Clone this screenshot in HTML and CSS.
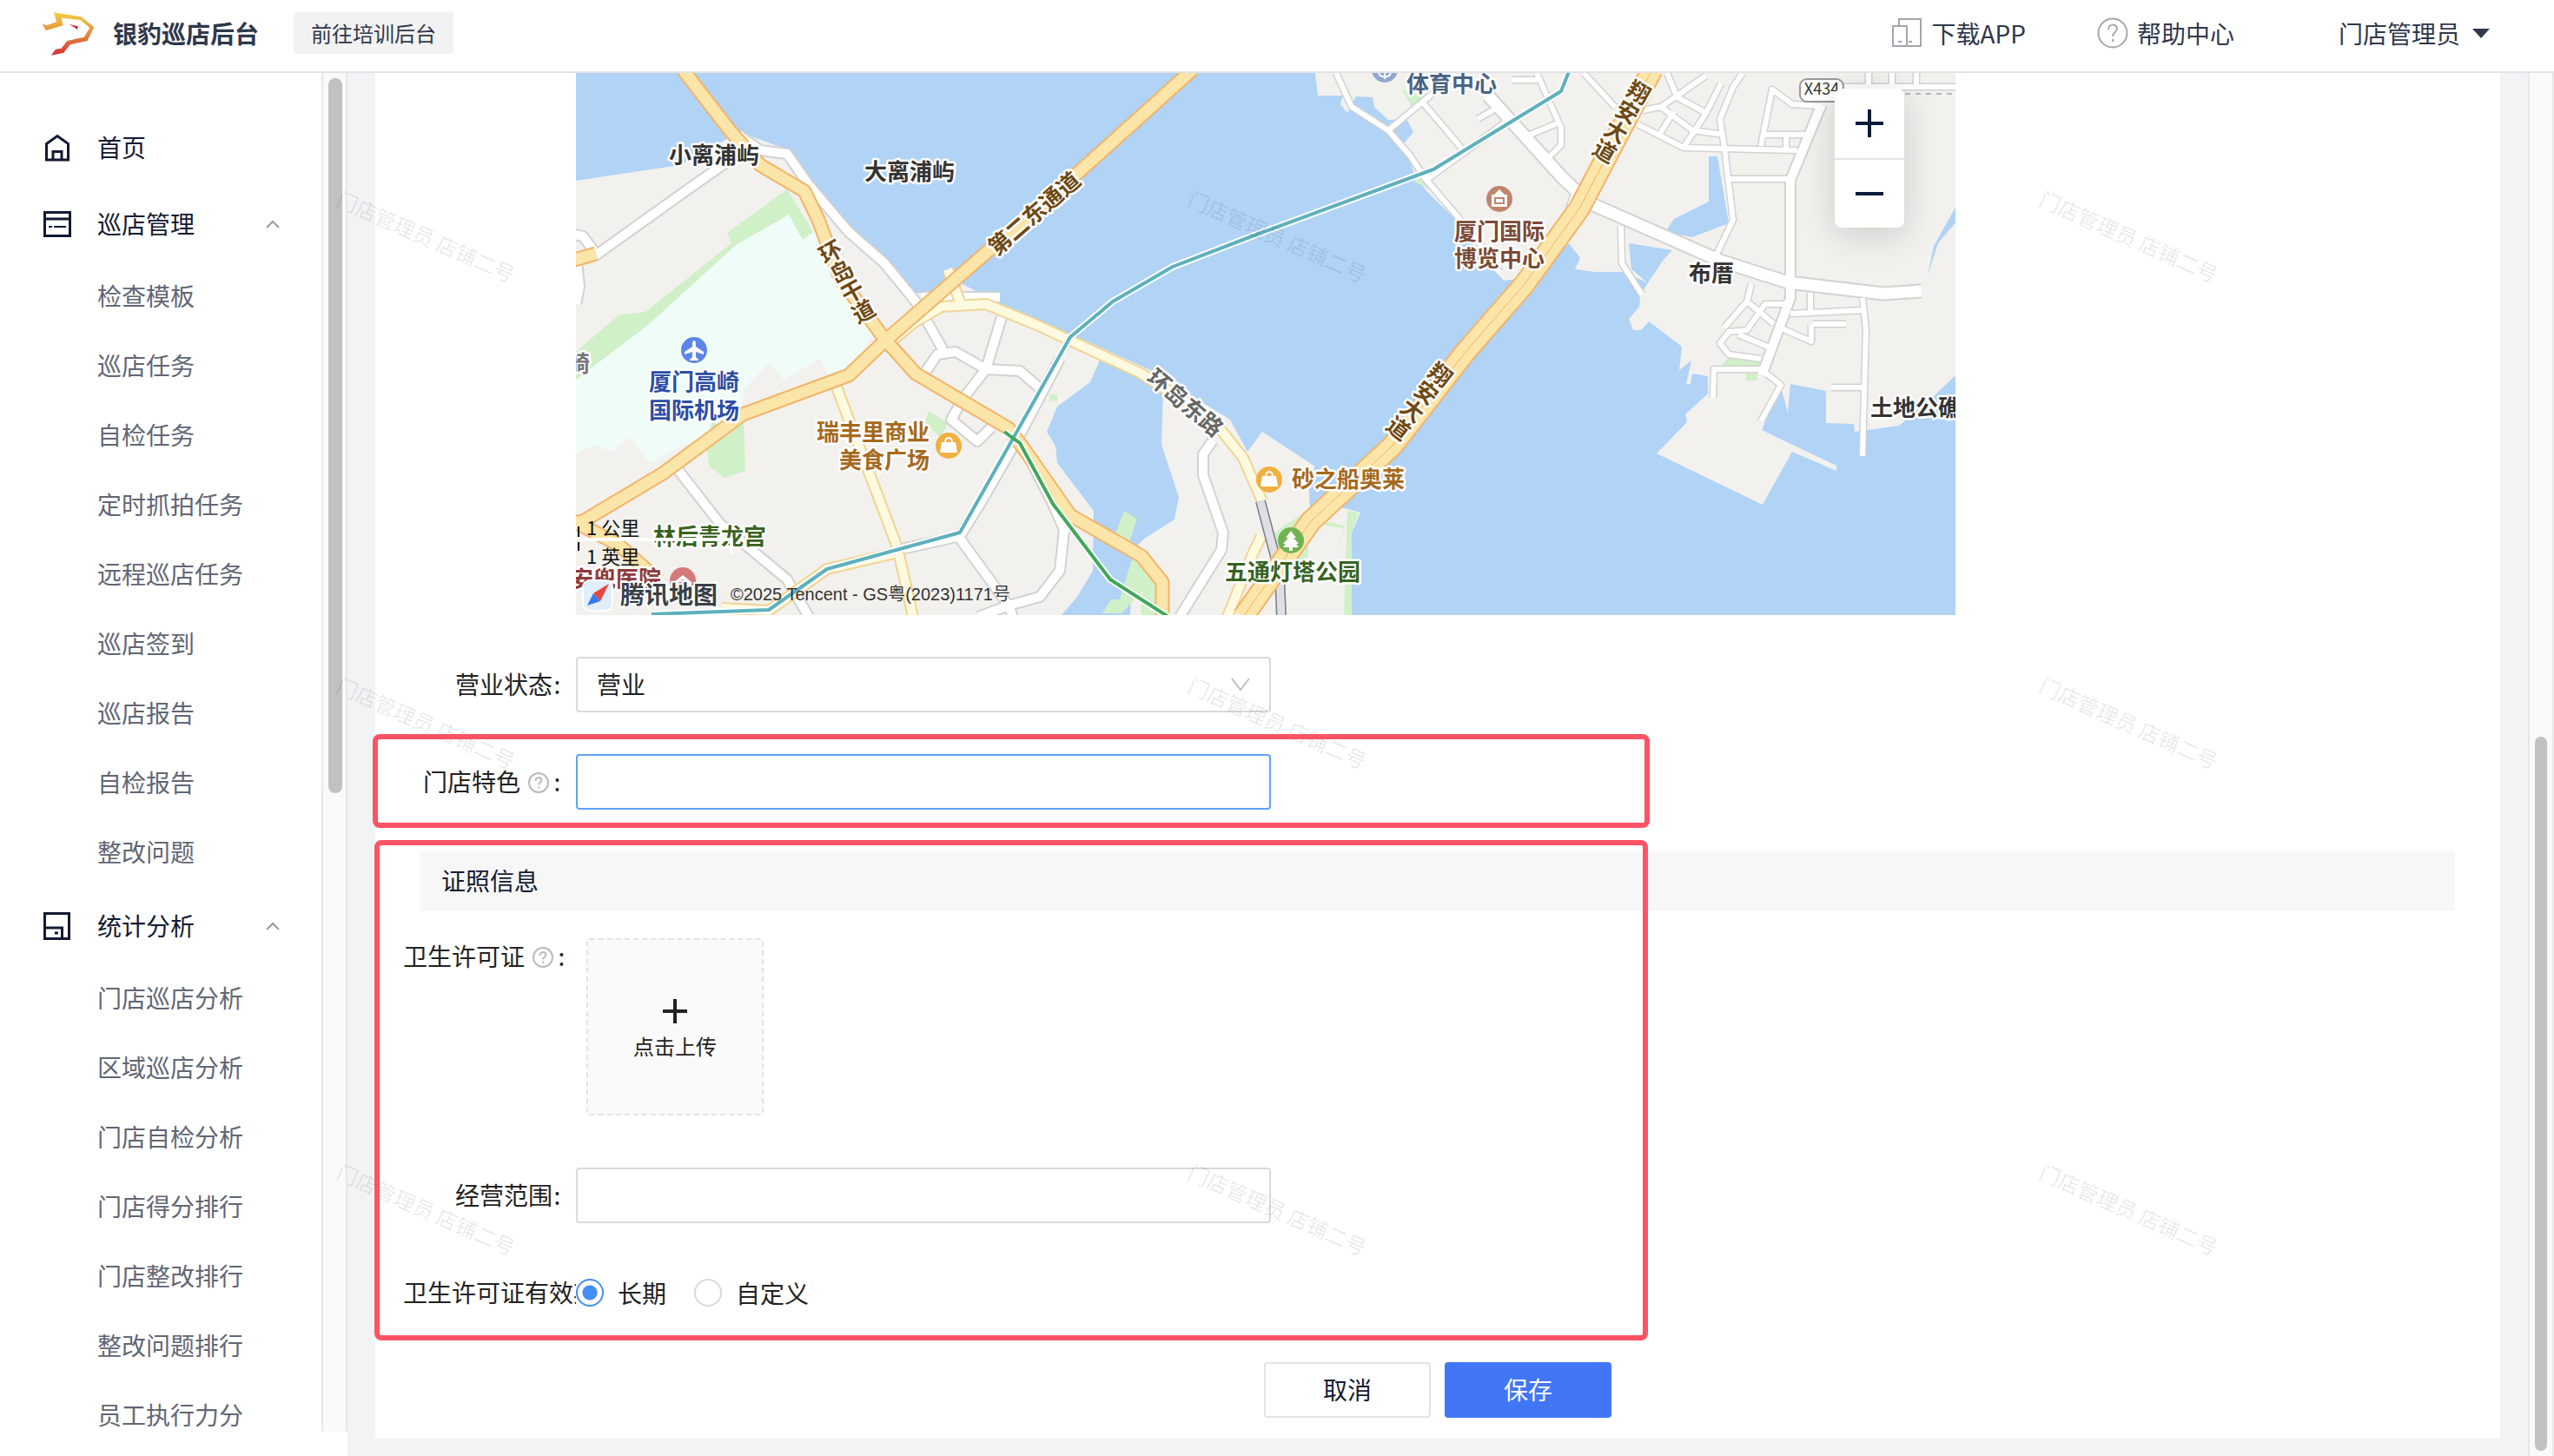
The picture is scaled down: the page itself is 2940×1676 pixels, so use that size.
FILE: index.html
```html
<!DOCTYPE html>
<html lang="zh-CN">
<head>
    <meta charset="utf-8">
    <meta name="viewport" content="width=device-width, initial-scale=1.0">
    <title>银豹巡店后台</title>
    <link rel="stylesheet" href="styles.css">
</head>
<body>
    <header class="header">
        <svg class="logo" viewBox="0 0 240 180">
            <defs>
                <linearGradient id="logoFill" x1="0" y1="0" x2="0" y2="1">
                    <stop offset="0" stop-color="#f3cf45"/>
                    <stop offset="0.55" stop-color="#e2853c"/>
                    <stop offset="1" stop-color="#d92b35"/>
                </linearGradient>
            </defs>
            <path fill="url(#logoFill)" d="M66 19L160 34 205 70 182 117 122 130 100 158 56 167 72 146 92 143 112 117 170 104 190 72 158 45 92 38 98 64 38 82 25 56 40 64 75 52z"/>
            <path fill="#d92b35" d="M119 60L150 67 146 79 138 71z"/>
        </svg>
        <h1 class="brand">银豹巡店后台</h1>
        <button class="switch-btn" type="button">前往培训后台</button>
        <nav class="header-nav">
            <a class="header-link" href="#">
                <svg width="36" height="36" viewBox="0 0 36 36" fill="none" stroke="#a3a6ad" stroke-width="2">
                    <path d="M9 10V2h25v31H2V10h16v23"/>
                    <path d="M8 28h4M20 28h4"/>
                </svg>
                下载APP
            </a>
            <a class="header-link header-help" href="#">
                <svg width="36" height="36" viewBox="0 0 36 36" fill="none" stroke="#a3a6ad" stroke-width="2">
                    <circle cx="18" cy="18" r="16.5"/>
                    <path d="M13 14c0-7 10-7 10-1 0 4-5 4-5 9M18 25v3"/>
                </svg>
                帮助中心
            </a>
            <button class="user-btn" type="button">门店管理员
                <svg width="20" height="11" viewBox="0 0 20 11"><path fill="#30384b" d="M0 0h20L10 11z"/></svg>
            </button>
        </nav>
    </header>

    <div class="layout">
        <aside class="sidebar">
            <div class="menu-wrap">
                <ul class="menu">
                    <li class="menu-head">
                        <svg class="menu-icon" viewBox="0 0 32 32"><path d="M3.5 30V11.500L16 2.500 28.500 11.500V30zM11 30v-9.500h10V30"/></svg>
                        <a href="#">首页</a>
                    </li>
                    <li class="menu-head">
                        <svg class="menu-icon" viewBox="0 0 32 32"><path d="M1.500 2.500h29v27h-29zM1.500 10h29"/><path stroke-width="2" d="M6 19h4M12 19h14"/></svg>
                        <a href="#">巡店管理</a>
                        <svg class="menu-arrow" viewBox="0 0 16 10"><path d="M1 9l7-7 7 7"/></svg>
                    </li>
                    <li class="menu-item"><a href="#">检查模板</a></li>
                    <li class="menu-item"><a href="#">巡店任务</a></li>
                    <li class="menu-item"><a href="#">自检任务</a></li>
                    <li class="menu-item"><a href="#">定时抓拍任务</a></li>
                    <li class="menu-item"><a href="#">远程巡店任务</a></li>
                    <li class="menu-item"><a href="#">巡店签到</a></li>
                    <li class="menu-item"><a href="#">巡店报告</a></li>
                    <li class="menu-item"><a href="#">自检报告</a></li>
                    <li class="menu-item"><a href="#">整改问题</a></li>
                    <li class="menu-head">
                        <svg class="menu-icon" viewBox="0 0 32 32"><path d="M1.500 1.500h28v29h-28zM1.500 18h20v12M13 24h4"/></svg>
                        <a href="#">统计分析</a>
                        <svg class="menu-arrow" viewBox="0 0 16 10"><path d="M1 9l7-7 7 7"/></svg>
                    </li>
                    <li class="menu-item"><a href="#">门店巡店分析</a></li>
                    <li class="menu-item"><a href="#">区域巡店分析</a></li>
                    <li class="menu-item"><a href="#">门店自检分析</a></li>
                    <li class="menu-item"><a href="#">门店得分排行</a></li>
                    <li class="menu-item"><a href="#">门店整改排行</a></li>
                    <li class="menu-item"><a href="#">整改问题排行</a></li>
                    <li class="menu-item"><a href="#">员工执行力分</a></li>
                </ul>
                <div class="track"><div class="thumb thumb-menu"></div></div>
            </div>
        </aside>

        <main class="content">
            <form class="panel">
                <div class="map">
                    <svg class="map-svg" viewBox="662 84 1588 624">
                        <defs>
                            <g id="minor">
                                <path d="M1537 84L1555 123 1597 150 1623 180 1639 205 1675 247 1702 280 1725 313"/>
                                <path d="M1597 150L1649 107 1675 84M1636 117L1681 170M1641 207L1733 140M1700 137L1726 122"/>
                                <path d="M1768 84L1775 100 1796 147 1796 167 1780 183M1760 155L1792 142M1740 92H1770"/>
                                <path d="M1822 84L1858 123M1884 143L1937 170 2068 173M1918 84L1928 108"/>
                                <path d="M2005 84L1994 100 1979 137 1984 170 1994 253 1973 297"/>
                                <path d="M1890 127L1911 123 1963 87M1911 123L1947 150 1984 155M1926 110L1963 130 1980 96M1908 157L1926 128M1937 170L1963 130"/>
                                <path d="M1989 206H2057M2026 168L2039 103 2062 120 2094 122M2030 155H2078M2055 170V156"/>
                                <path d="M1865 260L1866 303 1889 339M1805 240L1812 222"/>
                                <path d="M2143 343L2147 380 2143 525M2107 446H2143M2060 361L2146 357M2083 337V360M2086 373H2124"/>
                                <path d="M2015 327L2010 347 1984 377M2010 347L2041 373M2060 350L2031 350 2010 380 1989 382 1979 395 1989 408 2026 413M2000 385L2036 400M2050 378L2084 393V374"/>
                                <path d="M1971 458L1972 425H2026L2049 443 2026 485"/>
                                <path d="M2100 100H2250M2150 84V100M2177 84V100M2205 84V100"/>
                            </g>
                            <g id="major">
                                <path d="M849 155L874 173 905 177 930 213 976 267 1017 303 1053 347 1083 400 1085 410"/>
                                <path d="M845 180L788 220 686 293 670 272 650 268M663 300L666 330 662 350"/>
                                <path d="M1063 430L1078 408 1099 405 1134 425 1173 427 1196 447M1152 365L1134 425 1109 457 1094 483 1124 508 1140 492M1060 342H1150"/>
                                <path d="M1219 413L1175 497 1129 577 1104 617 1037 632M1104 620L1160 697 1165 710M1125 710L1160 697 1196 687 1219 657 1224 610 1211 580 1175 510"/>
                                <path d="M775 535L828 603 905 667 930 710"/>
                                <path d="M1395 507L1384 523 1384 547 1407 613 1405 633 1357 710"/>
                                <path d="M2096 120L2060 207V343L2027 432"/>
                            </g>
                            <g id="yellow">
                                <path d="M961 443L1032 630 1050 710M1017 400L1050 372 1083 353 1134 350 1190 373 1313 430 1395 483 1430 527 1452 577"/>
                                <path d="M1037 635L951 655 884 703 830 700M1451 617L1440 640 1412 710M1105 350L1090 310"/>
                            </g>
                            <g id="orange">
                                <path d="M785 80L839 150 874 190 925 220 941 253 966 320 1017 390 1053 430 1160 493 1180 520 1231 593 1313 640 1337 670V710"/>
                                <path d="M1372 80L1242 197 1017 393 976 432 854 477 762 545 670 600 650 606M650 595L711 627 757 668M650 302L685 292"/>
                            </g>
                            <path id="bridge" d="M1901 80L1817 240 1754 327 1686 405 1602 513 1508 600 1430 710"/>
                            <path id="rail" d="M1450 577L1472 660 1474 710"/>
                        </defs>

                        <rect class="land" x="662" y="84" width="1588" height="624"/>
                        <!-- sea -->
                        <path class="water" d="M662 84V208L782 190 850 152 905 172 966 247 1017 300 1053 337 1073 338 1094 320 1145 347 1190 370 1257 396 1323 426 1415 483 1435 520 1452 497 1513 537 1505 547 1507 587 1518 573 1539 583 1565 590 1555 613V708H2250V432L2224 457 2185 490 2134 497 2133 488 2101 487V450L2060 442 2057 475 2049 445 2027 495 2113 536V542L2062 520 2028 581 1906 522 1941 486 1939 477 1965 453V433L1947 430 1945 442H1940L1946 415 1932 426 1935 399 1897 370 1888 380H1879L1874 367 1886 353 1887 340 1895 327 1913 300 1924 288 1874 280 1877 310 1895 325 1866 313 1835 313 1812 310 1818 297 1805 280 1780 307 1754 320 1730 323 1700 292 1675 253 1641 220 1626 197 1615 165 1626 152 1618 137 1597 138 1581 123 1579 112 1560 111 1550 130 1542 120 1545 110H1516L1513 84z"/>
                        <path class="water" d="M1966 180H1976L1989 257 1947 273 1916 267 1926 252 1966 232zM2251 237L2225 283 2218 317 2230 280 2251 255z"/>
                        <path class="water" d="M1267 410L1338 447 1336 512 1356 572 1351 598 1316 620 1303 633 1300 708H1221L1239 687 1257 657 1258 588 1216 533 1214 513 1204 497 1216 468 1254 440z"/>
                        <!-- airport -->
                        <path class="airport" d="M905 235L938 267 1007 380 990 407 956 437 943 412 902 438 884 418 856 447 851 480 747 533 724 503 703 520 683 512 662 522V430L711 395 844 283z"/>
                        <path class="green" d="M905 218L935 267 923 276 907 247 846 282 744 375 711 400 662 437V405L711 363 742 359 841 280 836 268z"/>
                        <path class="green" d="M818 487H855L857 542 833 550 816 537 812 513zM1068 473L1091 487 1081 503 1063 487zM1207 454H1216V462H1207zM1293 588L1308 597 1298 627 1282 617z"/>
                        <path class="green" d="M1303 640L1330 660 1333 708H1312L1314 680 1290 706H1268L1278 690 1288 690z"/>
                        <path class="green" d="M1505 587L1466 613 1470 668 1505 640zM1550 588L1563 590 1555 613V708H1546zM1523 600L1547 605 1540 634 1545 608 1525 605z"/>
                        <path class="green" d="M1824 240L1811 267 1780 307 1775 300zM1613 103L1641 110 1623 122zM1626 197L1644 217 1628 210zM1989 412L2026 417V422H1979zM2009 430H2022V438H2009z"/>

                        <use href="#minor" class="road minor-case"/>
                        <use href="#major" class="road major-case"/>
                        <path class="road wide-case" d="M1712 110L1796 203 1827 233 1979 300 2057 325 2167 338 2211 335"/>
                        <use href="#minor" class="road minor-fill"/>
                        <use href="#major" class="road major-fill"/>
                        <path class="road wide-fill" d="M1712 110L1796 203 1827 233 1979 300 2057 325 2167 338 2211 335"/>
                        <path class="dots" d="M2180 108H2250"/>
                        <use href="#yellow" class="road yellow-case"/>
                        <use href="#yellow" class="road yellow-fill"/>
                        <use href="#orange" class="road orange-case"/>
                        <use href="#orange" class="road orange-fill"/>
                        <use href="#rail" class="road rail-case"/>
                        <use href="#rail" class="road rail-fill"/>
                        <use href="#bridge" class="road bridge-case"/>
                        <use href="#bridge" class="road bridge-fill"/>
                        <use href="#bridge" class="road bridge-mid"/>

                        <!-- metro lines -->
                        <path class="road metro-case" d="M1806 80L1796 105 1649 195 1440 272 1349 307 1280 347 1231 388 1104 613 951 655 884 702 749 707M1155 497L1173 510 1211 580 1277 667 1344 710"/>
                        <path class="road metro-teal" d="M1806 80L1796 105 1649 195 1440 272 1349 307 1280 347 1231 388 1104 613 951 655 884 702 749 707"/>
                        <path class="road metro-green" d="M1155 497L1173 510 1211 580 1277 667 1344 710"/>

                        <g class="pins">
                            <circle cx="798" cy="403" r="15" fill="#5c85e8"/>
                            <path d="M798 392c2 0 2 3 2 7l9 6v3l-9-3v6l3 3v1h-10v-1l3-3v-6l-9 3v-3l9-6c0-4 0-7 2-7z"/>
                            <circle cx="1091" cy="513" r="15" fill="#f0b040"/>
                            <path d="M1083 509h16l2 12h-20z"/><path class="pin-line" stroke="#fff" d="M1087 510c0-8 8-8 8 0"/>
                            <circle cx="1460" cy="552" r="15" fill="#f0b040"/>
                            <path d="M1452 548h16l2 12h-20z"/><path class="pin-line" stroke="#fff" d="M1456 549c0-8 8-8 8 0"/>
                            <circle cx="1725" cy="229" r="15" fill="#c0846c"/>
                            <path d="M1716 224h18v14h-18zM1725 218l6 6h-12z"/><path class="pin-line" stroke="#c0846c" d="M1720 228h10v6h-10z"/>
                            <circle cx="1485" cy="622" r="15" fill="#70b352"/>
                            <path d="M1485 611l6 8h-3l6 7h-3l3 4h-7v4h-4v-4h-7l3-4h-3l6-7h-3z"/>
                            <circle cx="785" cy="668" r="15" fill="#d47a7a"/>
                            <path d="M775 670l10-8 10 8v8h-20z"/><path class="pin-line" stroke="#d47a7a" d="M785 667v9M780 671h10"/>
                            <circle cx="1593" cy="80" r="15" fill="#8fa9d0"/>
                            <path class="pin-line" stroke="#fff" d="M1586 84c2 6 12 6 14 0M1593 84v7"/>
                        </g>

                        <g class="labels">
                            <text x="821" y="188">小离浦屿</text>
                            <text x="1046" y="207">大离浦屿</text>
                            <text x="1670" y="106" fill="#4a6485">体育中心</text>
                            <text x="1725" y="276" fill="#7b4a35">厦门国际</text>
                            <text x="1725" y="307" fill="#7b4a35">博览中心</text>
                            <text x="1969" y="324">布厝</text>
                            <text x="2204" y="479">土地公礁</text>
                            <text x="798" y="449" fill="#2b4ea5">厦门高崎</text>
                            <text x="798" y="482" fill="#2b4ea5">国际机场</text>
                            <text class="label-end" x="1069" y="507" fill="#a5691d">瑞丰里商业</text>
                            <text class="label-end" x="1069" y="539" fill="#a5691d">美食广场</text>
                            <text x="1551" y="561" fill="#a5691d">砂之船奥莱</text>
                            <text x="1487" y="668" fill="#38631f">五通灯塔公园</text>
                            <text x="816" y="627" fill="#38631f">林后青龙宫</text>
                            <text x="708" y="676" fill="#8f3a3a">安兜医院</text>
                            <text x="665" y="428" fill="#777">崎</text>
                            <text transform="translate(1190 246) rotate(-41)" y="9" fill="#6e4a14">第二东通道</text>
                            <text transform="translate(1363 464) rotate(40)" y="9" fill="#666">环岛东路</text>
                            <text class="label-v" transform="translate(974 324) rotate(-29)" fill="#6e4a14">环岛干道</text>
                            <text class="label-v" transform="translate(1866 140) rotate(30)" fill="#6e4a14">翔安大道</text>
                            <text class="label-v" transform="translate(1633 462) rotate(38)" fill="#6e4a14">翔安大道</text>
                        </g>
                        <rect x="2071" y="91" width="50" height="26" rx="8" fill="#fff" stroke="#999" stroke-width="2"/>
                        <text class="road-no" x="2096" y="109">X434</text>

                        <path stroke="#fff" stroke-width="4" d="M662 621H843M841 621v16"/>
                        <path stroke="#000" stroke-width="2" d="M665 606v12M665 624v10"/>
                        <text class="scale" x="674" y="616">1 公里</text>
                        <text class="scale" x="674" y="649">1 英里</text>
                        <rect x="670" y="668" width="34" height="35" rx="8" fill="#dfeefa" stroke="#fff" stroke-width="2"/>
                        <path fill="#e8453c" d="M700 672L682 683 690 692z"/>
                        <path fill="#3478f6" d="M675 697L682 683 690 692z"/>
                        <text class="map-brand" x="713" y="695">腾讯地图</text>
                        <text class="map-copy" x="840" y="691">©2025 Tencent - GS粤(2023)1171号</text>
                    </svg>
                    <div class="zoom">
                        <button type="button" aria-label="放大"><svg width="34" height="34" viewBox="0 0 34 34"><path d="M1 17h32M17 1v32"/></svg></button>
                        <button type="button" aria-label="缩小"><svg width="34" height="34" viewBox="0 0 34 34"><path d="M1 17h32"/></svg></button>
                    </div>
                </div>

                <div class="row">
                    <label class="label" for="status">营业状态<span class="colon">:</span></label>
                    <div class="select-box">
                        <select class="field" id="status">
                            <option>营业</option>
                            <option>停业</option>
                        </select>
                        <svg class="select-arrow" viewBox="0 0 22 16"><path d="M1 1l10 13L21 1"/></svg>
                    </div>
                </div>

                <div class="row">
                    <label class="label" for="feature">门店特色
                        <svg class="tip" viewBox="0 0 24 24"><circle cx="12" cy="12" r="11"/><path d="M8.500 10c0-5 7-5 7-1 0 2.500-3.500 2.500-3.500 5.500M12 16.500v2"/></svg><span class="colon">:</span>
                    </label>
                    <input class="field field-active" id="feature" type="text">
                    <div class="mark mark-feature"></div>
                </div>

                <section class="licence">
                    <h2 class="section-title">证照信息</h2>
                    <div class="row row-upload">
                        <label class="label label-left" for="licence">卫生许可证
                            <svg class="tip" viewBox="0 0 24 24"><circle cx="12" cy="12" r="11"/><path d="M8.500 10c0-5 7-5 7-1 0 2.500-3.500 2.500-3.500 5.500M12 16.500v2"/></svg><span class="colon">:</span>
                        </label>
                        <button class="upload" id="licence" type="button">
                            <svg width="28" height="28" viewBox="0 0 28 28"><path d="M0 14h28M14 0v28"/></svg>
                            点击上传
                        </button>
                    </div>
                    <div class="row">
                        <label class="label" for="scope">经营范围<span class="colon">:</span></label>
                        <input class="field" id="scope" type="text">
                    </div>
                    <div class="row">
                        <div class="label label-left label-clip" id="validLabel">卫生许可证有效期<span class="colon">:</span></div>
                        <div class="radios" role="radiogroup" aria-labelledby="validLabel">
                            <label class="radio"><input type="radio" name="valid" checked>长期</label>
                            <label class="radio"><input type="radio" name="valid">自定义</label>
                        </div>
                    </div>
                    <div class="mark mark-licence"></div>
                </section>

                <div class="actions">
                    <button class="btn" type="button">取消</button>
                    <button class="btn btn-primary" type="submit">保存</button>
                </div>
            </form>
        </main>
        <div class="track track-page"><div class="thumb thumb-page"></div></div>

        <div class="watermark" aria-hidden="true">
            <div><span>门店管理员 店铺二号</span></div>
            <div><span>门店管理员 店铺二号</span></div>
            <div><span>门店管理员 店铺二号</span></div>
            <div><span>门店管理员 店铺二号</span></div>
            <div><span>门店管理员 店铺二号</span></div>
            <div><span>门店管理员 店铺二号</span></div>
            <div><span>门店管理员 店铺二号</span></div>
            <div><span>门店管理员 店铺二号</span></div>
            <div><span>门店管理员 店铺二号</span></div>
        </div>
    </div>
</body>
</html>
```
FILE: styles.css
```css
* { box-sizing: border-box; }
body { margin: 0; height: 100vh; display: flex; flex-direction: column; overflow: hidden; background: #fff; color: #222; font: 28px/40px "Noto Sans CJK SC", sans-serif; }
a { color: inherit; text-decoration: none; }
button, input, select { font: inherit; color: inherit; }
button { cursor: pointer; }
h1, h2, ul { margin: 0; padding: 0; font-size: 28px; }

/* header */
.header { flex: none; display: flex; align-items: center; height: 84px; padding: 0 74px 6px 40px; border-bottom: 2px solid #e0e2e5; color: #30384b; }
.logo { width: 80px; height: 60px; }
.brand { margin: 0 40px 0 10px; font-weight: 700; }
.switch-btn { height: 48px; padding: 0 20px; border: 0; border-radius: 4px; background: #f2f2f2; font-size: 24px; line-height: 46px; }
.header-nav { display: flex; align-items: center; margin-left: auto; }
.header-link { display: flex; align-items: center; gap: 10px; }
.header-help { margin-left: 82px; }
.user-btn { display: flex; align-items: center; gap: 14px; margin-left: 120px; padding: 0; border: 0; background: none; }

/* sidebar */
.layout { position: relative; flex: 1; display: flex; min-height: 0; }
.sidebar { flex: none; width: 400px; padding-bottom: 28px; background: #fff; }
.menu-wrap { display: flex; height: 100%; overflow: hidden; }
.menu { flex: 1; padding: 42px 48px 0 48px; list-style: none; }
.menu-head { display: flex; align-items: center; height: 88px; color: #121a33; }
.menu-head a { margin-left: 28px; padding-bottom: 3px; }
.menu-icon { width: 36px; height: 32px; fill: none; stroke: #121a33; stroke-width: 3; }
.menu-arrow { width: 16px; height: 10px; margin-left: auto; fill: none; stroke: #999; stroke-width: 2; }
.menu-item { height: 80px; padding-left: 64px; line-height: 77px; color: #616675; white-space: nowrap; }
.track { flex: none; width: 30px; padding: 6px; border: solid #e6e7e9; border-width: 0 2px; background: #fafafa; }
.thumb { width: 16px; margin: 0 auto; border-radius: 8px; background: #c1c1c1; }
.thumb-menu { height: 53%; }
.track-page { display: flex; align-items: flex-end; }
.thumb-page { height: 52%; }

/* form */
.content { flex: 1; min-width: 0; padding: 0 32px 20px; background: #f2f3f5; overflow: hidden; }
.panel { padding-bottom: 24px; background: #fff; }
.map { position: relative; width: 1588px; max-width: 80%; margin: 0 0 48px 231px; overflow: hidden; }
.map-svg { display: block; width: 100%; }
.row { position: relative; display: flex; align-items: center; margin-bottom: 48px; min-height: 64px; }
.label { flex: none; display: flex; align-items: center; justify-content: flex-end; width: 231px; padding: 0 16px 2px 0; white-space: nowrap; }
.label-left { justify-content: flex-start; padding: 0 0 2px 32px; }
.label-clip { overflow: hidden; }
.colon { width: 11px; text-align: center; }
.tip { width: 24px; height: 24px; margin: 4px 4px 0 9px; fill: none; stroke: #b9babd; stroke-width: 2; }
.field { width: 800px; height: 64px; padding: 0 24px; border: 2px solid #d9d9d9; border-radius: 4px; background: #fff; outline: none; appearance: none; }
.field-active { border-color: #5ca3f8; }
.select-box { position: relative; }
.select-box .field { display: block; padding: 0 22px 2px; }
.select-arrow { position: absolute; right: 24px; top: 24px; width: 22px; height: 16px; fill: none; stroke: #bfbfbf; stroke-width: 2; pointer-events: none; }

.licence { position: relative; }
.section-title { height: 68px; margin: 0 52px 32px; padding-left: 24px; background: #f7f7f7; color: #121a33; font-weight: 400; line-height: 66px; }
.row-upload { align-items: flex-start; margin-bottom: 60px; }
.upload { display: flex; flex-direction: column; align-items: center; justify-content: center; gap: 6px; width: 204px; height: 204px; margin-left: 12px; padding-top: 10px; border: 2px dashed #e3e3e3; border-radius: 4px; background: #fafafa; font-size: 24px; }
.upload svg { stroke: #222; stroke-width: 4; }
.radios { display: flex; gap: 32px; }
.radio { display: flex; align-items: center; gap: 16px; }
.radio input { width: 32px; height: 32px; margin: 0; border: 2px solid #d9d9d9; border-radius: 50%; background: #fff; appearance: none; }
.radio input:checked { border-color: #438df7; background: radial-gradient(circle, #438df7 8px, #fff 9px); }
.mark { position: absolute; z-index: 2; border: 6px solid #ff5364; border-radius: 8px; pointer-events: none; }
.mark-feature { top: -23px; left: -3px; width: 1470px; height: 108px; }
.mark-licence { top: -13px; bottom: -23px; left: -1px; width: 1466px; }
.actions { display: flex; justify-content: center; gap: 16px; }
.btn { width: 192px; height: 64px; padding-bottom: 3px; border: 2px solid #e2e3e5; border-radius: 4px; background: #fff; color: #121a33; }
.btn-primary { border-color: #4176f6; background: #4176f6; color: #fff; }

/* map */
.land { fill: #f2f1ee; }
.water { fill: #b0d3f6; }
.airport { fill: #f0fcf7; }
.green { fill: #d0f0c8; }
.road { fill: none; stroke-linejoin: round; }
.minor-case { stroke: #d2d2d2; stroke-width: 9px; }
.minor-fill { stroke: #fff; stroke-width: 6px; }
.major-case { stroke: #d2d2d2; stroke-width: 14px; }
.major-fill { stroke: #fff; stroke-width: 10px; }
.wide-case { stroke: #d2d2d2; stroke-width: 17px; }
.wide-fill { stroke: #fff; stroke-width: 13px; }
.dots { stroke: #b5b5bb; stroke-width: 2px; stroke-dasharray: 6 6; }
.yellow-case { stroke: #f0d494; stroke-width: 14px; }
.yellow-fill { stroke: #fefae0; stroke-width: 10px; }
.orange-case { stroke: #f3b469; stroke-width: 17px; }
.orange-fill { stroke: #fce5a8; stroke-width: 13px; }
.rail-case { stroke: #777a85; stroke-width: 12px; }
.rail-fill { stroke: #dedfe5; stroke-width: 9px; }
.bridge-case { stroke: #f3b469; stroke-width: 26px; }
.bridge-fill { stroke: #fce5a8; stroke-width: 22px; }
.bridge-mid { stroke: #f3b469; stroke-width: 1px; }
.metro-case { stroke: #fff; stroke-width: 8px; }
.metro-teal { stroke: #5fb0bd; stroke-width: 4px; }
.metro-green { stroke: #42a75a; stroke-width: 4px; }
.pins { fill: #fff; }
.pin-line { fill: none; stroke-width: 2px; }
.labels { font-size: 26px; font-weight: 700; fill: #333; stroke: #fff; stroke-width: 5px; stroke-linejoin: round; paint-order: stroke; text-anchor: middle; }
.label-end { text-anchor: end; }
.label-v { writing-mode: vertical-rl; }
.road-no { font-size: 18px; fill: #333; text-anchor: middle; }
.scale { font-size: 22px; fill: #111; }
.map-brand { font-size: 28px; font-weight: 700; fill: #3a3f47; stroke: #fff; stroke-width: 4px; paint-order: stroke; }
.map-copy { font: 20px "Liberation Sans", "Noto Sans CJK SC", sans-serif; fill: #333; }
.zoom { position: absolute; top: 18px; right: 59px; width: 80px; border-radius: 8px; background: #fff; box-shadow: 0 8px 40px rgba(0, 0, 0, 0.16); }
.zoom button { display: flex; align-items: center; justify-content: center; width: 80px; height: 80px; padding: 0; border: 0; background: none; }
.zoom button + button { border-top: 2px solid #dfe3ea; }
.zoom svg { stroke: #0a1a3a; stroke-width: 4; }

.watermark { position: absolute; top: 0; right: 0; bottom: 0; left: 380px; display: grid; grid-template-columns: repeat(3, 980px); grid-auto-rows: 560px; padding-top: 172px; overflow: hidden; pointer-events: none; font-size: 24px; line-height: 32px; color: rgba(0, 0, 0, 0.09); white-space: nowrap; }
.watermark span { display: inline-block; transform: rotate(24deg); }
```
